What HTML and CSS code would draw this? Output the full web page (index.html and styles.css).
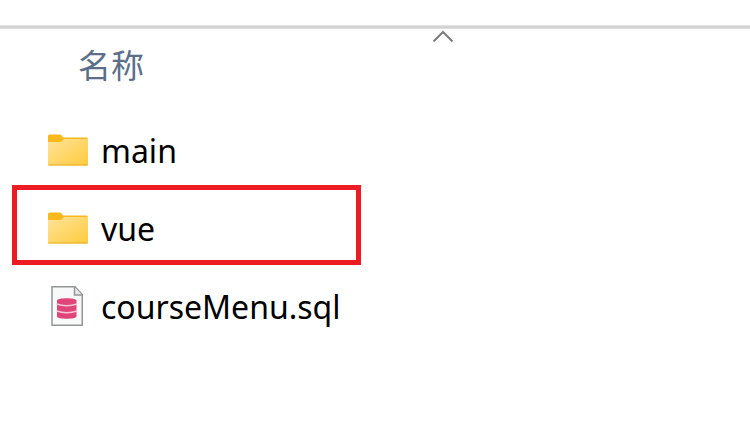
FILE: index.html
```html
<!DOCTYPE html>
<html lang="zh-CN">
<head>
<meta charset="utf-8">
<title>文件列表</title>
<link rel="stylesheet" href="styles.css">
</head>
<body>
<svg class="defs" aria-hidden="true">
  <defs>
    <linearGradient id="sheet" x1="0" y1="0" x2="1" y2="1">
      <stop offset="0" stop-color="#ffe49a"/>
      <stop offset="1" stop-color="#ffca3c"/>
    </linearGradient>
    <symbol id="folder" viewBox="0 0 40 32">
      <path d="M0 2Q0 .5 1.500 .5H12Q13.500 .5 15 3.500H38.500Q40 3.500 40 5V30H0Z" fill="#f9b81c"/>
      <path d="M0 8H13L16 5H40V30.500Q40 31.500 39 31.500H1Q0 31.500 0 30.500Z" fill="url(#sheet)"/>
      <path d="M0 30.500H40Q40 31.500 39 31.500H1Q0 31.500 0 30.500Z" fill="#e8ac25"/>
    </symbol>
  </defs>
</svg>
<header class="bar"></header>
<main>
  <div class="heading">
    <span>名称</span>
    <svg class="sort" viewBox="0 0 22 13" aria-hidden="true"><path d="M1.500 11.500L11 2L20.500 11.500"/></svg>
  </div>
  <ul class="files">
    <li class="row"><svg class="icon" aria-hidden="true"><use href="#folder"/></svg><span class="name">main</span></li>
    <li class="row marked"><svg class="icon" aria-hidden="true"><use href="#folder"/></svg><span class="name">vue</span></li>
    <li class="row">
      <svg class="icon file" viewBox="0 0 40 40" aria-hidden="true">
        <path d="M4 .750H27L34.250 8.500V39.250H4Z" fill="#f8f9f9" stroke="#929696" stroke-width="1.500"/>
        <path d="M26.500 1V9H34" fill="#e8eaea" stroke="#929696" stroke-width="1.500"/>
        <path d="M9 14.500C9 11.500 28.500 11.500 28.500 14.500V30.500C28.500 33.500 9 33.500 9 30.500Z" fill="#e04478"/>
        <path d="M8.500 18Q18.750 21.500 29 18M8.500 25Q18.750 28.500 29 25" fill="none" stroke="#f5c9d8" stroke-width="1.500"/>
      </svg>
      <span class="name">courseMenu.sql</span>
    </li>
  </ul>
</main>
</body>
</html>
```
FILE: styles.css
```css
body {
  margin: 0;
  background: #fff;
  color: #000;
  font-family: "Noto Sans", "Noto Sans CJK SC", sans-serif;
  font-size: 32px;
}

.defs {
  position: absolute;
  width: 0;
  height: 0;
}

.bar {
  height: 26px;
  border-bottom: 2px solid #d3d3d3;
  box-shadow: 0 1px #dedede, inset 0 -1px #e2e2e2;
}

.heading {
  position: relative;
  padding: 12px 78px 0;
  line-height: 48px;
  font-size: 33px;
  color: #5b6f8b;
  font-family: "Noto Sans CJK SC", sans-serif;
}

.sort {
  position: absolute;
  top: 2px;
  left: 432px;
  width: 22px;
  height: 13px;
  fill: none;
  stroke: #7c7c7c;
  stroke-width: 2;
}

.files {
  list-style: none;
  margin: 23px 0 0;
  padding: 0;
}

.row {
  position: relative;
  display: flex;
  align-items: center;
  gap: 13px;
  height: 78px;
  padding-left: 48px;
}

.icon {
  flex: none;
  width: 40px;
  height: 32px;
}

.file {
  height: 40px;
}

.name {
  padding-top: 1px;
}

.marked::after {
  content: "";
  position: absolute;
  top: -4px;
  bottom: 2px;
  left: 12px;
  width: 339px;
  border: 5px solid #ed1c24;
}
```
